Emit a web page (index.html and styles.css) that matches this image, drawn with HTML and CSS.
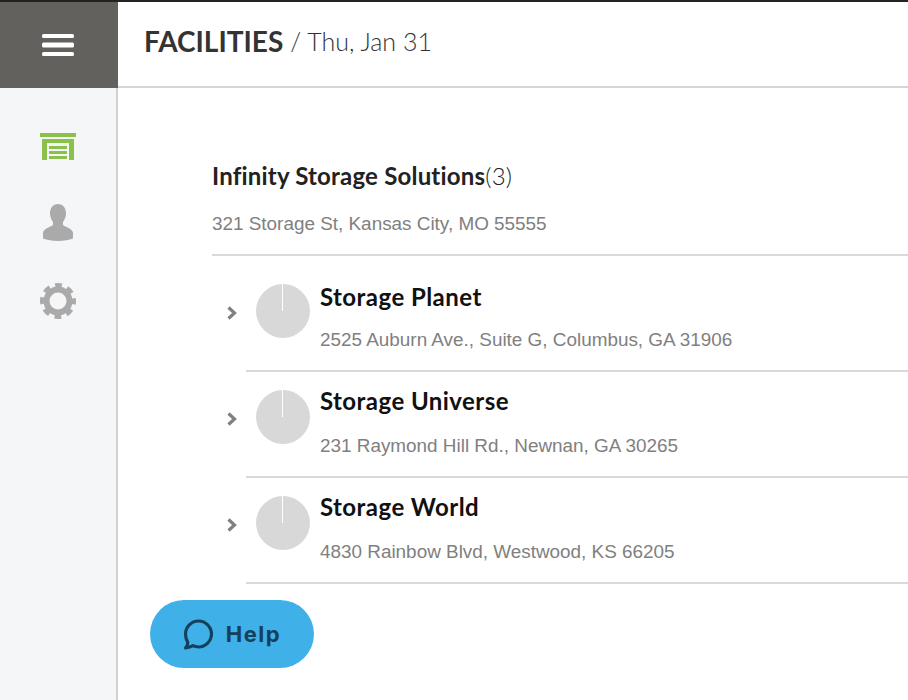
FILE: index.html
```html
<!DOCTYPE html>
<html>
<head>
<meta charset="UTF-8">
<meta name="viewport" content="width=device-width, initial-scale=1.0">
<title>Facilities</title>
<link rel="stylesheet" href="styles.css">
</head>
<body>
<div class="app">
  <div class="sidebar">
    <div class="menu-button">
      <svg width="32" height="22" viewBox="0 0 32 22"><g fill="#fff"><rect y="0" width="32" height="4" rx="1.5"/><rect y="8.500" width="32" height="5" rx="1.5"/><rect y="18" width="32" height="4" rx="1.5"/></g></svg>
    </div>
    <div class="nav">
      <svg class="nav-icon" width="36" height="27" viewBox="0 0 36 27"><g fill="#8bc04a"><rect x="0" y="0" width="36" height="4"/><path d="M2 6h32v21h-5V10H7v17H2z"/><rect x="9" y="13" width="18" height="3"/><rect x="9" y="18" width="18" height="3"/><rect x="9" y="23" width="18" height="3"/></g></svg>
      <svg class="nav-icon" width="30" height="37" viewBox="0 0 30 37"><path fill="#aaa" d="M15 0c5 0 8 4 8 9.500 0 3.500-1.500 6.500-3 8.500v3c1 1.500 9 3 10 7.500.2 2 .2 4 0 6-4 1.500-9 2.500-15 2.500S4 36 0 34.500c-.2-2-.2-4 0-6 1-4.500 9-6 10-7.500v-3c-1.500-2-3-5-3-8.500C7 4 10 0 15 0z"/></svg>
      <svg class="nav-icon" width="36" height="36" viewBox="0 0 36 36"><g fill="none" stroke="#aaa"><circle cx="18" cy="18" r="11.500" stroke-width="6"/><circle cx="18" cy="18" r="15.800" stroke-width="4.400" stroke-dasharray="6.800 5.610" stroke-dashoffset="3.400"/></g></svg>
    </div>
  </div>
  <div class="main">
    <div class="header">
      <span class="header-title">FACILITIES</span>
      <span class="header-date">/ Thu, Jan 31</span>
    </div>
    <div class="content">
      <div class="company">
        <div class="company-name">Infinity Storage Solutions<span class="company-count">(3)</span></div>
        <div class="address">321 Storage St, Kansas City, MO 55555</div>
      </div>
      <div class="facility first">
        <svg class="chevron" width="12" height="16" viewBox="0 0 12 16"><path d="M2.500 2.500 8.500 8l-6 5.500" fill="none" stroke="#808080" stroke-width="3.200"/></svg>
        <div class="pie"></div>
        <div class="facility-text">
          <div class="facility-name">Storage Planet</div>
          <div class="address">2525 Auburn Ave., Suite G, Columbus, GA 31906</div>
        </div>
      </div>
      <div class="facility">
        <svg class="chevron" width="12" height="16" viewBox="0 0 12 16"><path d="M2.500 2.500 8.500 8l-6 5.500" fill="none" stroke="#808080" stroke-width="3.200"/></svg>
        <div class="pie"></div>
        <div class="facility-text">
          <div class="facility-name">Storage Universe</div>
          <div class="address">231 Raymond Hill Rd., Newnan, GA 30265</div>
        </div>
      </div>
      <div class="facility">
        <svg class="chevron" width="12" height="16" viewBox="0 0 12 16"><path d="M2.500 2.500 8.500 8l-6 5.500" fill="none" stroke="#808080" stroke-width="3.200"/></svg>
        <div class="pie"></div>
        <div class="facility-text">
          <div class="facility-name">Storage World</div>
          <div class="address">4830 Rainbow Blvd, Westwood, KS 66205</div>
        </div>
      </div>
    </div>
  </div>
</div>
<div class="help">
  <svg width="30" height="31" viewBox="0 0 30 31"><path d="M15.500 2a13 13 0 0 1 0 26c-2 0-4-.5-5.500-1.300-1.800 1-4 1.800-7.500 2.300 1.300-1.500 2.300-3.300 2.300-5.500C3.500 21 2.500 18 2.500 15a13 13 0 0 1 13-13z" fill="none" stroke="#14405c" stroke-width="3.200" stroke-linejoin="round"/></svg>
  <span>Help</span>
</div>
</body>
</html>
```

FILE: styles.css
```css
html, body {
  margin: 0;
  padding: 0;
  height: 100%;
  overflow: hidden;
  background-color: white;
}

body {
  font-family: Lato, sans-serif;
  box-sizing: border-box;
  border-top: 2px solid #222;
}

.app {
  display: flex;
  height: 698px;
}

.sidebar {
  width: 116px;
  flex: none;
  background-color: #f5f6f8;
  border-right: 2px solid #d2d2d2;
}

.menu-button {
  width: 116px;
  height: 86px;
  padding-right: 2px;
  background-color: #63615d;
  display: flex;
  justify-content: center;
  align-items: center;
}

.nav {
  display: flex;
  flex-direction: column;
  align-items: center;
  padding-top: 45px;
}

.nav-icon {
  display: block;
  flex: none;
}

.nav-icon:nth-child(2) {
  margin-top: 44px;
}

.nav-icon:nth-child(3) {
  margin-top: 42px;
}

.main {
  flex: 1;
  min-width: 0;
}

.header {
  height: 78px;
  padding-bottom: 6px;
  border-bottom: 2px solid #d5d5d5;
  padding-left: 26px;
  display: flex;
  align-items: center;
  gap: 7px;
  color: #333;
}

.header-title {
  font-size: 28px;
  font-weight: 700;
}

.header-date {
  font-size: 25px;
  font-weight: 300;
}

.content {
  padding-left: 94px;
}

.company {
  height: 168px;
  box-sizing: border-box;
  padding-top: 73px;
  border-bottom: 2px solid #d9d9d9;
}

.company-name {
  font-size: 24px;
  font-weight: 700;
  line-height: 30px;
  letter-spacing: 0.2px;
  color: #222;
}

.company-count {
  font-weight: 300;
}

.address {
  font-family: "Liberation Sans", Arial, sans-serif;
  font-size: 18.9px;
  line-height: 22px;
  color: #808080;
  margin-top: 22px;
}

.facility {
  display: flex;
  align-items: flex-start;
  height: 104px;
  margin-left: 34px;
  border-bottom: 2px solid #d9d9d9;
  position: relative;
}

.facility.first {
  padding-top: 10px;
}

.chevron {
  position: absolute;
  left: -20px;
  top: 39px;
}

.first .chevron {
  top: 49px;
}

.pie {
  width: 54px;
  height: 54px;
  border-radius: 50%;
  background-color: #d8d8d8;
  margin: 18px 10px 0;
  flex: none;
  position: relative;
}

.pie::after {
  content: "";
  position: absolute;
  left: 26px;
  top: 0;
  width: 1px;
  height: 27px;
  background-color: white;
}

.facility-text {
  margin-top: 14px;
}

.first .facility-text {
  margin-top: 16px;
}

.facility-name {
  font-size: 24px;
  font-weight: 700;
  line-height: 30px;
  letter-spacing: 0.45px;
  color: #111;
}

.facility-text .address {
  margin-top: 19px;
}

.first .facility-text .address {
  margin-top: 17px;
}

.help {
  position: absolute;
  left: 150px;
  top: 600px;
  width: 164px;
  height: 68px;
  border-radius: 34px;
  background-color: #40b0e8;
  color: #14405c;
  display: flex;
  align-items: center;
  justify-content: center;
  gap: 13px;
  font-family: Inter, sans-serif;
  font-weight: 700;
  font-size: 22px;
  letter-spacing: 1.5px;
}
```
